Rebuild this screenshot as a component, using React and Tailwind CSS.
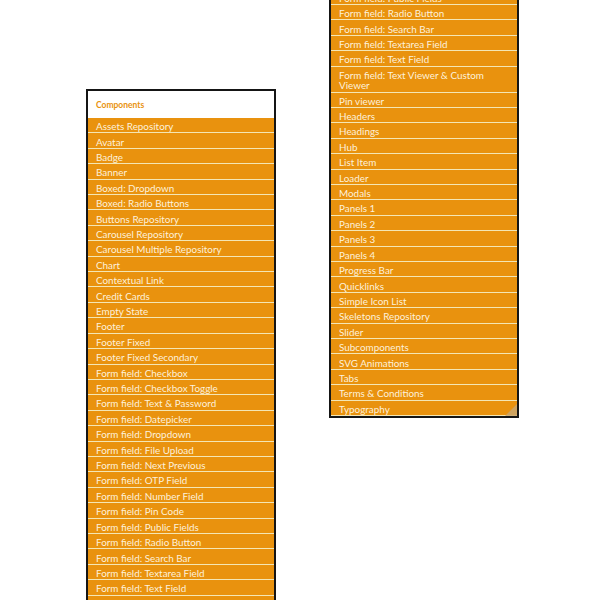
import React from "react";

const items = [
  "Assets Repository",
  "Avatar",
  "Badge",
  "Banner",
  "Boxed: Dropdown",
  "Boxed: Radio Buttons",
  "Buttons Repository",
  "Carousel Repository",
  "Carousel Multiple Repository",
  "Chart",
  "Contextual Link",
  "Credit Cards",
  "Empty State",
  "Footer",
  "Footer Fixed",
  "Footer Fixed Secondary",
  "Form field: Checkbox",
  "Form field: Checkbox Toggle",
  "Form field: Text & Password",
  "Form field: Datepicker",
  "Form field: Dropdown",
  "Form field: File Upload",
  "Form field: Next Previous",
  "Form field: OTP Field",
  "Form field: Number Field",
  "Form field: Pin Code",
  "Form field: Public Fields",
  "Form field: Radio Button",
  "Form field: Search Bar",
  "Form field: Textarea Field",
  "Form field: Text Field",
  ["Form field: Text Viewer & Custom", "Viewer"],
  "Pin viewer",
  "Headers",
  "Headings",
  "Hub",
  "List Item",
  "Loader",
  "Modals",
  "Panels 1",
  "Panels 2",
  "Panels 3",
  "Panels 4",
  "Progress Bar",
  "Quicklinks",
  "Simple Icon List",
  "Skeletons Repository",
  "Slider",
  "Subcomponents",
  "SVG Animations",
  "Tabs",
  "Terms & Conditions",
  "Typography",
];

function Panel({ grip }) {
  return (
    <div className="relative w-[190px] shrink-0 border-2 border-[#151515] bg-[#e9920e]">
      <div className="flex h-[27px] items-center bg-white pl-[8px] pt-[1px] text-[8.5px] font-bold text-[#e9920e]">
        Components
      </div>
      {items.map((it, i) => (
        <div
          key={i}
          className="border-b border-[#f4e6b4] pt-[3.15px] pb-[0.78px] pl-[8px] text-[9.9px] leading-[10.5px] text-[#fdf1dc]"
        >
          {Array.isArray(it) ? (
            <>
              {it[0]}
              <br />
              {it[1]}
            </>
          ) : (
            it
          )}
        </div>
      ))}
      {grip && (
        <svg
          className="absolute bottom-0 right-0"
          width="12"
          height="12"
          viewBox="0 0 12 12"
        >
          <polygon points="12,0 12,12 0,12" fill="#c9a66e" opacity="0.85" />
        </svg>
      )}
    </div>
  );
}

export default function App() {
  return (
    <div
      className="h-[600px] w-[616px] overflow-hidden bg-white"
      style={{ fontFamily: "Lato, 'Open Sans', sans-serif" }}
    >
      <div className="flex items-start gap-[53px] pl-[86px]">
        <div className="mt-[89px]">
          <Panel />
        </div>
        <div className="mt-[-440px]">
          <Panel grip />
        </div>
      </div>
    </div>
  );
}
